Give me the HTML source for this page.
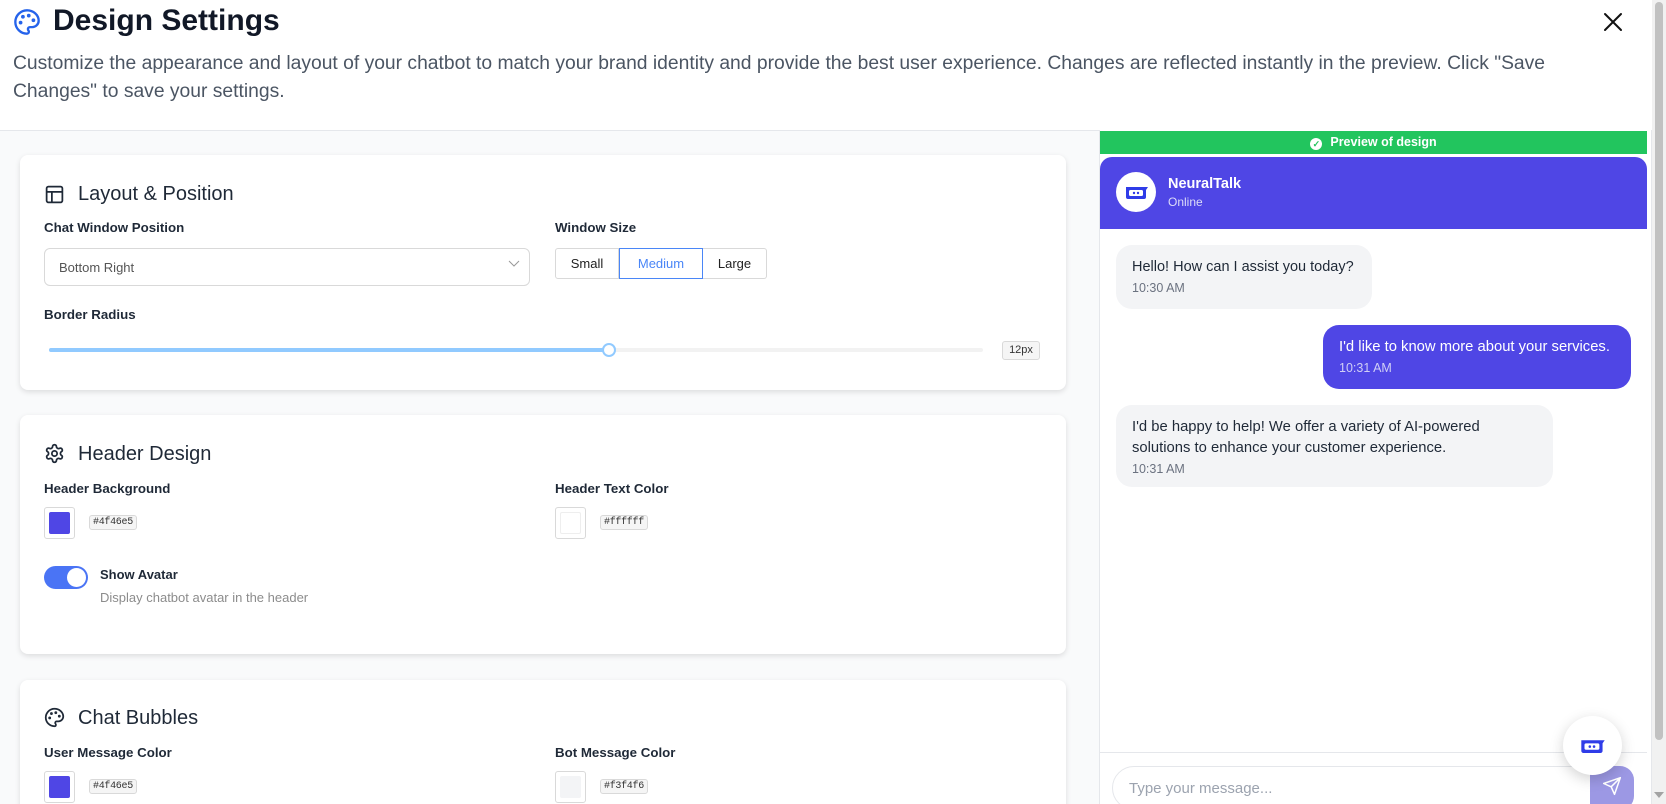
<!DOCTYPE html>
<html><head><meta charset="utf-8"><style>
*{box-sizing:border-box;margin:0;padding:0}
html,body{width:1666px;height:804px;overflow:hidden}
body{background:#fff;font-family:"Liberation Sans",Arial,sans-serif;color:#111827;position:relative}
.abs{position:absolute}
.card{position:absolute;left:20px;width:1046px;background:#fff;border-radius:8px;box-shadow:0 2px 6px rgba(0,0,0,.12)}
.ct{position:absolute;left:58px;font-size:20px;color:#1f2937}
.lbl{position:absolute;font-size:13.3px;font-weight:bold;color:#1f2937}
.tag{position:absolute;font-family:"Liberation Mono",monospace;font-size:10px;letter-spacing:-0.3px;background:#f5f5f5;border:1px solid #d9d9d9;border-radius:3px;padding:1px 3px;color:#333}
.sw{position:absolute;width:31px;height:32px;border:1px solid #d9d9d9;border-radius:3px;background:#fff}
.sw i{position:absolute;left:4px;top:4px;right:4px;bottom:4px;border-radius:2px}
.bub{position:absolute;border-radius:16px;padding:12px 16px;font-size:14.8px;line-height:21px}
.bub small{display:block;font-size:12.5px;line-height:20px}
</style></head><body>
<svg class="abs" style="left:13px;top:8px" width="28" height="28" viewBox="0 0 24 24" fill="none" stroke="#2563eb" stroke-width="2" stroke-linecap="round" stroke-linejoin="round"><circle cx="13.5" cy="6.5" r=".6" fill="#2563eb"/><circle cx="17.5" cy="10.5" r=".6" fill="#2563eb"/><circle cx="8.5" cy="7.5" r=".6" fill="#2563eb"/><circle cx="6.5" cy="12.5" r=".6" fill="#2563eb"/><path d="M12 2C6.5 2 2 6.5 2 12s4.5 10 10 10c.9 0 1.6-.7 1.6-1.7 0-.4-.2-.8-.4-1.1-.3-.3-.4-.6-.4-1.1 0-.9.7-1.7 1.7-1.7h2c3 0 5.5-2.5 5.5-5.5C22 6 17.5 2 12 2z"/></svg>
<div class="abs" style="left:53px;top:4px;font-size:30px;font-weight:bold;color:#111827">Design Settings</div>
<svg class="abs" style="left:1601px;top:10px" width="24" height="24" viewBox="0 0 24 24" stroke="#111" stroke-width="2" stroke-linecap="round"><path d="M4 4L20 20M20 4L4 20"/></svg>
<div class="abs" style="left:13px;top:50px;width:1620px;font-size:19.3px;line-height:28px;color:#4b5563">Customize the appearance and layout of your chatbot to match your brand identity and provide the best user experience. Changes are reflected instantly in the preview. Click "Save<br>Changes" to save your settings.</div>
<div class="abs" style="left:0;top:130px;width:1099px;height:674px;background:#f9fafb;border-top:1px solid #e5e7eb"></div>

<div class="card" style="top:155px;height:235px">
<svg class="abs" style="left:24px;top:29px" width="21" height="21" viewBox="0 0 24 24" fill="none" stroke="#1f2937" stroke-width="2"><rect x="3" y="3" width="18" height="18" rx="2"/><path d="M3 9h18M9 9v12"/></svg>
<div class="ct" style="top:28px">Layout &amp; Position</div>
<div class="lbl" style="left:24px;top:65px">Chat Window Position</div>
<div class="abs" style="left:24px;top:93px;width:486px;height:38px;border:1px solid #d9d9d9;border-radius:6px;font-size:13px;color:#555;padding:11px 14px">Bottom Right</div>
<svg class="abs" style="left:488px;top:103px" width="12" height="10" viewBox="0 0 12 10" fill="none" stroke="#999"><path d="M1 3l5 5 5-5"/></svg>
<div class="lbl" style="left:535px;top:65px">Window Size</div>
<div class="abs" style="left:535px;top:93px;height:31px;display:flex;font-size:13px;color:#222">
<div style="width:64px;border:1px solid #d9d9d9;border-radius:3px 0 0 3px;text-align:center;line-height:29px">Small</div>
<div style="width:84px;border:1px solid #4a86f7;color:#4a86f7;text-align:center;line-height:29px">Medium</div>
<div style="width:64px;border:1px solid #d9d9d9;border-left:0;border-radius:0 3px 3px 0;text-align:center;line-height:29px">Large</div></div>
<div class="lbl" style="left:24px;top:152px">Border Radius</div>
<div class="abs" style="left:29px;top:193px;width:934px;height:4px;background:#f2f2f2;border-radius:2px"></div>
<div class="abs" style="left:29px;top:193px;width:560px;height:4px;background:#91caff;border-radius:2px"></div>
<div class="abs" style="left:582px;top:188px;width:14px;height:14px;border:2px solid #91caff;border-radius:50%;background:#fff"></div>
<div class="abs" style="left:982px;top:186px;width:38px;height:19px;border:1px solid #d9d9d9;background:#f5f5f5;border-radius:3px;font-size:11px;text-align:center;line-height:17px;color:#333">12px</div>
</div>

<div class="card" style="top:415px;height:239px">
<svg class="abs" style="left:24px;top:28px" width="21" height="21" viewBox="0 0 24 24" fill="none" stroke="#1f2937" stroke-width="2" stroke-linecap="round" stroke-linejoin="round"><path d="M12.2 2h-.4a2 2 0 0 0-2 2v.2a2 2 0 0 1-1 1.7l-.4.3a2 2 0 0 1-2 0l-.2-.1a2 2 0 0 0-2.7.7l-.2.4a2 2 0 0 0 .7 2.7l.2.1a2 2 0 0 1 1 1.7v.5a2 2 0 0 1-1 1.8l-.2.1a2 2 0 0 0-.7 2.7l.2.4a2 2 0 0 0 2.7.7l.2-.1a2 2 0 0 1 2 0l.4.3a2 2 0 0 1 1 1.7v.2a2 2 0 0 0 2 2h.4a2 2 0 0 0 2-2v-.2a2 2 0 0 1 1-1.7l.4-.3a2 2 0 0 1 2 0l.2.1a2 2 0 0 0 2.7-.7l.2-.4a2 2 0 0 0-.7-2.7l-.2-.1a2 2 0 0 1-1-1.8v-.5a2 2 0 0 1 1-1.7l.2-.1a2 2 0 0 0 .7-2.7l-.2-.4a2 2 0 0 0-2.7-.7l-.2.1a2 2 0 0 1-2 0l-.4-.3a2 2 0 0 1-1-1.7V4a2 2 0 0 0-2-2z"/><circle cx="12" cy="12" r="3"/></svg>
<div class="ct" style="top:28px">Header Design</div>
<div class="lbl" style="left:24px;top:66px">Header Background</div>
<div class="sw" style="left:24px;top:92px"><i style="background:#4f46e5"></i></div>
<div class="tag" style="left:69px;top:100px">#4f46e5</div>
<div class="lbl" style="left:535px;top:66px">Header Text Color</div>
<div class="sw" style="left:535px;top:92px"><i style="background:#fff;border:1px solid #eee"></i></div>
<div class="tag" style="left:580px;top:100px">#ffffff</div>
<div class="abs" style="left:24px;top:151px;width:44px;height:23px;border-radius:12px;background:#4a74f5"></div>
<div class="abs" style="left:47px;top:153px;width:19px;height:19px;border-radius:50%;background:#fff"></div>
<div class="abs" style="left:80px;top:152px;font-size:13px;font-weight:bold;color:#1f2937">Show Avatar</div>
<div class="abs" style="left:80px;top:175px;font-size:13px;color:#8c8c8c">Display chatbot avatar in the header</div>
</div>

<div class="card" style="top:680px;height:140px">
<svg class="abs" style="left:24px;top:27px" width="21" height="21" viewBox="0 0 24 24" fill="none" stroke="#1f2937" stroke-width="2" stroke-linecap="round" stroke-linejoin="round"><circle cx="13.5" cy="6.5" r=".6" fill="#1f2937"/><circle cx="17.5" cy="10.5" r=".6" fill="#1f2937"/><circle cx="8.5" cy="7.5" r=".6" fill="#1f2937"/><circle cx="6.5" cy="12.5" r=".6" fill="#1f2937"/><path d="M12 2C6.5 2 2 6.5 2 12s4.5 10 10 10c.9 0 1.6-.7 1.6-1.7 0-.4-.2-.8-.4-1.1-.3-.3-.4-.6-.4-1.1 0-.9.7-1.7 1.7-1.7h2c3 0 5.5-2.5 5.5-5.5C22 6 17.5 2 12 2z"/></svg>
<div class="ct" style="top:27px">Chat Bubbles</div>
<div class="lbl" style="left:24px;top:65px">User Message Color</div>
<div class="sw" style="left:24px;top:91px"><i style="background:#4f46e5"></i></div>
<div class="tag" style="left:69px;top:99px">#4f46e5</div>
<div class="lbl" style="left:535px;top:65px">Bot Message Color</div>
<div class="sw" style="left:535px;top:91px"><i style="background:#f3f4f6"></i></div>
<div class="tag" style="left:580px;top:99px">#f3f4f6</div>
</div>

<div class="abs" style="left:1099px;top:130px;width:553px;height:674px;background:#fff;border-left:1px solid #e5e7eb;border-right:1px solid #e5e7eb"></div>
<div class="abs" style="left:1100px;top:131px;width:547px;height:23px;background:#22c55e;color:#fff;font-size:12.5px;font-weight:bold;text-align:center;line-height:23px"><span style="display:inline-block;width:12px;height:12px;border-radius:50%;background:#fff;color:#22c55e;font-size:9px;line-height:12px;vertical-align:-1px;margin-right:8px">✓</span>Preview of design</div>
<div class="abs" style="left:1100px;top:157px;width:547px;height:72px;background:#4f46e5;border-radius:12px 12px 0 0"></div>
<div class="abs" style="left:1116px;top:172px;width:40px;height:40px;border-radius:50%;background:#fff"></div>
<svg class="abs" style="left:1124px;top:184px" width="26" height="16" viewBox="0 0 26 16"><path d="M2 3h22l-2 3v7a2 2 0 0 1-2 2H4a2 2 0 0 1-2-2z" fill="#2f3ce8"/><rect x="5" y="6" width="14" height="6" rx="1.5" fill="#fff"/><circle cx="10" cy="9" r="1.2" fill="#2f3ce8"/><circle cx="14" cy="9" r="1.2" fill="#2f3ce8"/></svg>
<div class="abs" style="left:1168px;top:176px;font-size:14.5px;font-weight:bold;color:#fff">NeuralTalk</div>
<div class="abs" style="left:1168px;top:195px;font-size:12px;color:#dcdcf8">Online</div>

<div class="bub" style="left:1116px;top:245px;height:64px;background:#f3f4f6;color:#1f2937;white-space:nowrap;font-size:14.5px;padding-right:18px">Hello! How can I assist you today?<small style="color:#6b7280">10:30 AM</small></div>
<div class="bub" style="left:1323px;top:325px;width:308px;height:64px;background:#4f46e5;color:#fff;white-space:nowrap">I'd like to know more about your services.<small style="color:#d0cff5">10:31 AM</small></div>
<div class="bub" style="left:1116px;top:405px;width:437px;height:82px;background:#f3f4f6;color:#1f2937;padding-right:60px">I'd be happy to help! We offer a variety of AI-powered solutions to enhance your customer experience.<small style="color:#6b7280">10:31 AM</small></div>

<div class="abs" style="left:1100px;top:752px;width:547px;height:1px;background:#e5e7eb"></div>
<div class="abs" style="left:1112px;top:766px;width:520px;height:44px;border:1px solid #e5e7eb;border-radius:22px;font-size:15px;color:#9ca3af;padding:13px 16px">Type your message...</div>
<div class="abs" style="left:1590px;top:766px;width:44px;height:44px;border-radius:0 14px 14px 0;background:#9c98e4"></div>
<svg class="abs" style="left:1602px;top:776px" width="20" height="20" viewBox="0 0 24 24" fill="none" stroke="#fff" stroke-width="1.8" stroke-linejoin="round"><path d="M22 2L11 13M22 2l-7 20-4-9-9-4z"/></svg>
<div class="abs" style="left:1563px;top:716px;width:59px;height:59px;border-radius:50%;background:#fff;box-shadow:0 4px 14px rgba(0,0,0,.18)"></div>
<svg class="abs" style="left:1579px;top:737px" width="28" height="17" viewBox="0 0 26 16"><path d="M2 3h22l-2 3v7a2 2 0 0 1-2 2H4a2 2 0 0 1-2-2z" fill="#2f3ce8"/><rect x="5" y="6" width="14" height="6" rx="1.5" fill="#fff"/><circle cx="10" cy="9" r="1.2" fill="#2f3ce8"/><circle cx="14" cy="9" r="1.2" fill="#2f3ce8"/></svg>

<div class="abs" style="left:1652px;top:0;width:14px;height:804px;background:#f1f1f1"></div>
<div class="abs" style="left:1655px;top:2px;width:8px;height:738px;background:#c1c1c1;border-radius:4px"></div>
<div class="abs" style="left:1654px;top:792px;width:0;height:0;border-left:5px solid transparent;border-right:5px solid transparent;border-top:6px solid #a3a3a3"></div>
</body></html>
